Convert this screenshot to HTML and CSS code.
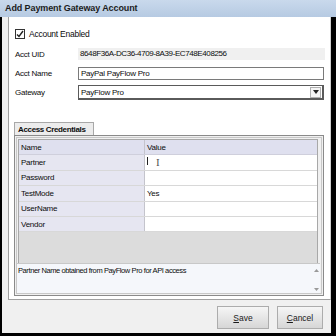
FILE: index.html
```html
<!DOCTYPE html>
<html lang="en">
<head>
    <meta charset="UTF-8">
    <link rel="stylesheet" href="styles.css">
    <title>Add Payment Gateway Account</title>
</head>
<body>
    <div class="title-bar">Add Payment Gateway Account</div>

    <div class="frame">
        <div class="client">
            <div class="panel">
                <label class="check-row">
                    <span class="checkbox">
                        <svg width="8" height="8" viewBox="0 0 8 8"><path d="M1 4.5 L3 6.5 L7 1" fill="none" stroke="#222" stroke-width="1.4"/></svg>
                    </span>
                    Account Enabled
                </label>

                <div class="field-row">
                    <span class="field-label">Acct UID</span>
                    <div class="readonly">8648F36A-DC36-4709-8A39-EC748E408256</div>
                </div>
                <div class="field-row">
                    <span class="field-label">Acct Name</span>
                    <div class="textbox">PayPal PayFlow Pro</div>
                </div>
                <div class="field-row">
                    <span class="field-label">Gateway</span>
                    <div class="select">
                        <span>PayFlow Pro</span>
                        <span class="select-btn">
                            <svg width="6" height="4" viewBox="0 0 6 4"><path d="M0 0 H6 L3 4 Z" fill="#222"/></svg>
                        </span>
                    </div>
                </div>

                <div class="tabs">
                    <div class="tab">Access Credentials</div>
                    <div class="tab-body">
                        <div class="grid">
                            <div class="grid-row head">
                                <div class="cell name">Name</div>
                                <div class="cell value">Value</div>
                            </div>
                            <div class="grid-row">
                                <div class="cell name">Partner</div>
                                <div class="cell value"><span class="caret"></span><span class="ibeam">I</span></div>
                            </div>
                            <div class="grid-row">
                                <div class="cell name">Password</div>
                                <div class="cell value"></div>
                            </div>
                            <div class="grid-row">
                                <div class="cell name">TestMode</div>
                                <div class="cell value">Yes</div>
                            </div>
                            <div class="grid-row">
                                <div class="cell name">UserName</div>
                                <div class="cell value"></div>
                            </div>
                            <div class="grid-row">
                                <div class="cell name">Vendor</div>
                                <div class="cell value"></div>
                            </div>
                            <div class="grid-empty"></div>
                        </div>
                        <div class="desc">
                            <span>Partner Name obtained from PayFlow Pro for API access</span>
                            <div class="scroll">
                                <svg width="5" height="3" viewBox="0 0 5 3"><path d="M0 3 L2.5 0 L5 3 Z" fill="#999"/></svg>
                                <svg width="5" height="3" viewBox="0 0 5 3"><path d="M0 0 H5 L2.5 3 Z" fill="#999"/></svg>
                            </div>
                        </div>
                    </div>
                </div>
            </div>

            <div class="buttons">
                <button class="btn"><u>S</u>ave</button>
                <button class="btn"><u>C</u>ancel</button>
            </div>
        </div>
    </div>
</body>
</html>
```

FILE: styles.css
```css
* {
    box-sizing: border-box;
}

body {
    margin: 0;
    width: 336px;
    height: 336px;
    overflow: hidden;
    background: #000;
    font-family: "Liberation Sans", Arial, sans-serif;
    font-size: 8px;
    letter-spacing: -0.25px;
    color: #0c0c0c;
    display: flex;
    flex-direction: column;
}

.title-bar {
    height: 17px;
    padding: 3px 0 0 5px;
    background: linear-gradient(#c9d9ec, #b6cae2);
    font-size: 9px;
    font-weight: bold;
    letter-spacing: -0.1px;
    color: #1c1c1c;
}

.frame {
    flex: 1;
    padding: 0 5px 3px 2px;
    display: flex;
}

.client {
    flex: 1;
    background: #f0f0f0;
    display: flex;
    flex-direction: column;
}

.panel {
    height: 283px;
    margin-left: 6px;
    background: #fff;
    border-left: 1px solid #a0a0a0;
    border-bottom: 1px solid #a0a0a0;
    border-right: 1px solid #d0d0d0;
    padding: 11px 3px 0 6px;
}

.check-row {
    display: flex;
    align-items: center;
    gap: 4px;
    height: 11px;
    font-size: 8.5px;
}

.checkbox {
    width: 10px;
    height: 10px;
    border: 1px solid #333;
    display: flex;
    align-items: center;
    justify-content: center;
    background: #fff;
}

.field-row {
    display: flex;
    align-items: center;
    height: 14px;
    margin-top: 5px;
}

.field-row:first-of-type {
    margin-top: 8px;
}

.field-label {
    width: 63px;
}

.readonly {
    flex: 1;
    height: 12px;
    line-height: 12px;
    padding-left: 2px;
    background: #f0f0f0;
    letter-spacing: -0.4px;
    margin-right: 2px;
}

.textbox {
    flex: 1;
    height: 13px;
    line-height: 11px;
    padding-left: 2px;
    border: 1px solid #7a7a7a;
    margin-right: 3px;
}

.select {
    flex: 1;
    height: 15px;
    margin-right: 3px;
    margin-top: 1px;
    border: 1px solid #5a5a5a;
    border-width: 1px 2px 2px 1px;
    display: flex;
    align-items: center;
    justify-content: space-between;
    padding-left: 2px;
}

.select-btn {
    width: 11px;
    height: 11px;
    margin-right: 1px;
    border: 1px solid #b0b0b0;
    background: #f4f4f4;
    display: flex;
    align-items: center;
    justify-content: center;
}

.tabs {
    margin-top: 23px;
    margin-left: -1px;
    margin-right: 3px;
}

.tab {
    width: 80px;
    height: 13px;
    padding: 2px 0 0 3px;
    border: 1px solid #a8a8a8;
    border-bottom: none;
    background: #ececec;
    font-weight: bold;
    letter-spacing: -0.35px;
    white-space: nowrap;
}

.tab-body {
    height: 161px;
    border: 1px solid #8a8a8a;
    outline: 1px solid #c8c8c8;
    outline-offset: -3px;
    background: #f0f0f0;
    padding: 3px 3px 2px 2px;
    display: flex;
    flex-direction: column;
}

.grid {
    height: 124px;
    margin-right: 2px;
    margin-left: 1px;
    border: 1px solid #a8a8a8;
    border-bottom: none;
    display: flex;
    flex-direction: column;
}

.grid-row {
    display: flex;
    height: 15.4px;
    border-bottom: 1px solid #d8d8d8;
}

.grid-row.head {
    background: #dfe0ef;
    border-bottom-color: #cfcfdc;
}

.cell {
    display: flex;
    align-items: center;
    padding-left: 2px;
}

.cell.name {
    width: 126px;
    background: #e6e6f1;
    border-right: 1px solid #c4c4cc;
}

.head .cell.name {
    background: #dfe0ef;
}

.cell.value {
    flex: 1;
    background: #fff;
    position: relative;
}

.head .cell.value {
    background: #dfe0ef;
}

.caret {
    width: 1px;
    height: 8px;
    background: #222;
    margin-top: -4px;
}

.ibeam {
    position: absolute;
    left: 11px;
    top: 1px;
    font-family: "Liberation Serif", serif;
    font-size: 11px;
    color: #555;
}

.grid-empty {
    flex: 1;
    background: #dcdcdc;
}

.desc {
    flex: 1;
    background: #f5f7fb;
    border-top: 1px solid #c8c8c8;
    display: flex;
    justify-content: space-between;
    padding-left: 1px;
    padding-top: 2px;
    font-size: 7.5px;
    letter-spacing: -0.4px;
}

.scroll {
    width: 8px;
    display: flex;
    flex-direction: column;
    justify-content: space-between;
    align-items: center;
    padding: 3px 0 2px;
}

.buttons {
    flex: 1;
    display: flex;
    justify-content: flex-end;
    align-items: center;
    gap: 8px;
    padding: 5px 8px 3px 0;
}

.btn {
    height: 23px;
    width: 52px;
    font-family: "Liberation Sans", Arial, sans-serif;
    font-size: 8.5px;
    color: #1a1a1a;
    border: 1px solid #acacac;
    background: linear-gradient(#f6f6f6, #d6d6d6);
    padding: 0;
}

.btn + .btn {
    width: 46px;
}
```
